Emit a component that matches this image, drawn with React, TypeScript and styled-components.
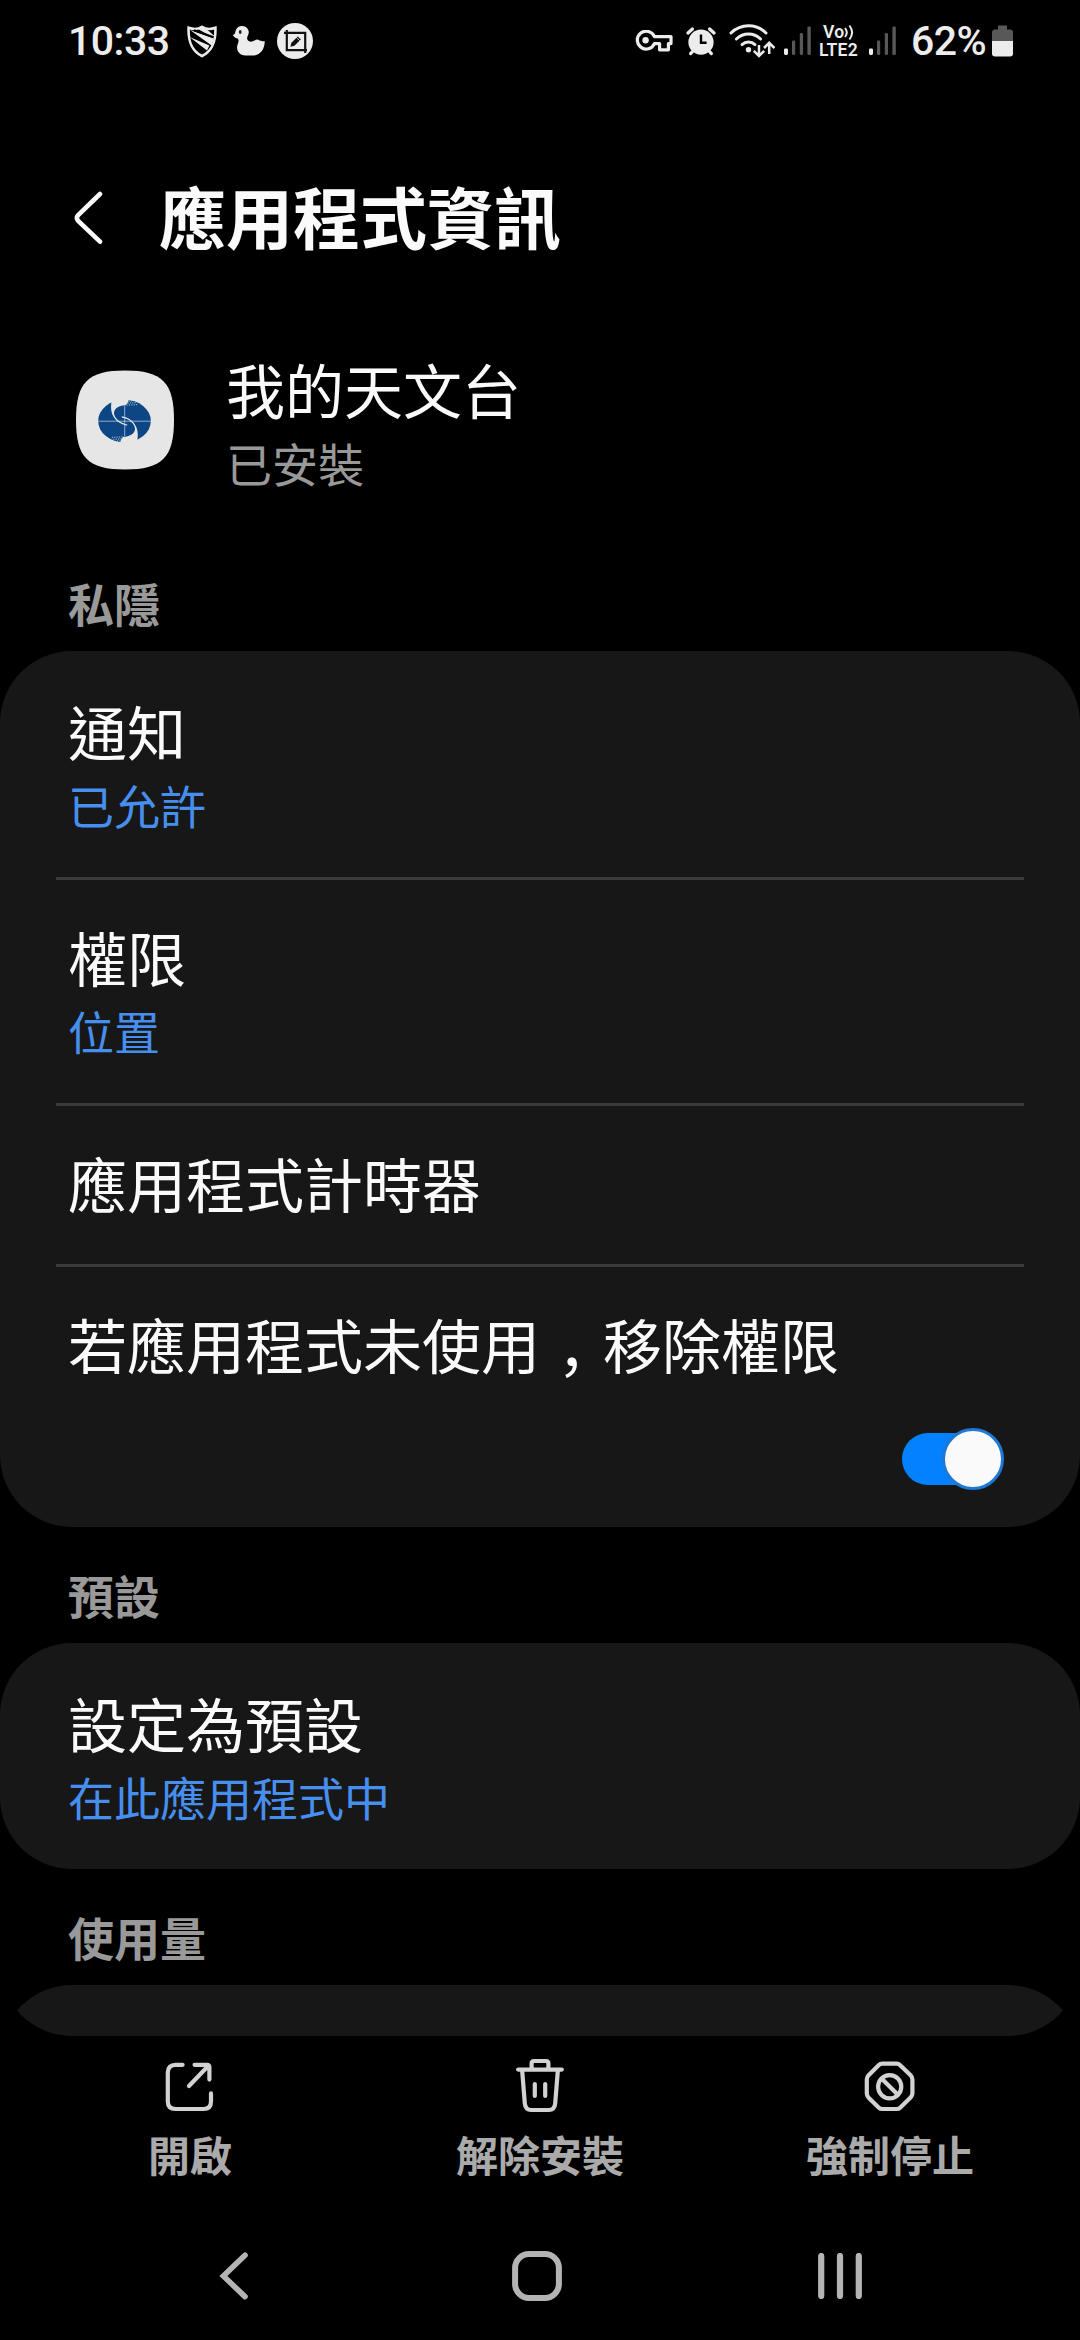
import React, { useState } from 'react';
import styled, { createGlobalStyle } from 'styled-components';

const CJK = `"Noto Sans CJK TC", "Noto Sans CJK JP", sans-serif`;
const LATIN = `Roboto, "Noto Sans", sans-serif`;

const GlobalStyle = createGlobalStyle`
  *, *::before, *::after { box-sizing: border-box; }
  html, body { margin: 0; padding: 0; background: #000; }
  button { border: 0; padding: 0; background: none; font: inherit; color: inherit; }
  svg { display: block; flex: none; }
`;

const Screen = styled.div`
  display: flex;
  flex-direction: column;
  width: 1080px;
  height: 2340px;
  overflow: hidden;
  background: #000;
  color: #fafafa;
  font-family: ${CJK};

  > * { flex-shrink: 0; }
`;

/* Status bar */
const StatusBar = styled.header`
  display: flex;
  justify-content: space-between;
  align-items: center;
  height: 82px;
  padding: 0 67px 0 68px;
  color: #ececec;
  font-family: ${LATIN};
`;

const StatusGroup = styled.div`
  display: flex;
  align-items: center;
`;

const Clock = styled.span`
  width: 116px;
  font-size: 41px;
  line-height: 48px;
  font-weight: 500;
  letter-spacing: -0.5px;
  white-space: nowrap;
`;

const StatusIcon = styled.span<{ $gap?: number }>`
  display: flex;
  margin-left: ${({ $gap = 0 }) => $gap}px;
`;

const VoLte = styled.span`
  display: flex;
  flex-direction: column;
  width: 41px;
  margin-left: 8px;
  font-weight: 600;
  font-size: 17.5px;
  line-height: 18px;
  letter-spacing: 0.2px;
  white-space: nowrap;
`;

const VoLine = styled.span`
  display: flex;
  align-items: center;
  padding-left: 4px;
  height: 17px;
`;

const Percent = styled.span`
  width: 78px;
  margin-left: 15px;
  font-size: 41px;
  line-height: 48px;
  font-weight: 500;
  letter-spacing: -0.6px;
  white-space: nowrap;
`;

/* Page header */
const TitleBar = styled.div`
  display: flex;
  align-items: center;
  height: 240px;
  padding: 32px 0 0 74px;
`;

const Title = styled.h1`
  margin: 0 0 7px 55px;
  font-size: 67px;
  line-height: 96px;
  font-weight: 700;
`;

const Scroll = styled.main`
  height: 1714px;
  border-radius: 0 0 72px 72px;
  overflow: hidden;
`;

const AppHeader = styled.div`
  display: flex;
  align-items: flex-start;
  height: 213px;
  padding: 0 0 0 76px;
`;

const AppIcon = styled.span`
  display: flex;
  padding-top: 48px;
`;

const AppText = styled.div`
  display: flex;
  flex-direction: column;
  margin: 27px 0 0 52px;
`;

/* Sections */
const SectionLabel = styled.h2`
  margin: 0;
  height: 116px;
  padding: 33px 0 0 68px;
  font-size: 46px;
  line-height: 68px;
  font-weight: 700;
  color: #999;
`;

const Card = styled.section`
  border-radius: 72px;
  background: #171717;
`;

const Row = styled.div<{ $height: number }>`
  display: flex;
  flex-direction: column;
  height: ${({ $height }) => $height}px;
  padding: 40px 68px 0;
  background: linear-gradient(#3a3a3a, #3a3a3a) 56px 0 / 968px 3px no-repeat;

  &:first-child { background: none; }
`;

const RowTitle = styled.span`
  height: 80px;
  font-size: 59px;
  line-height: 80px;
  white-space: nowrap;
`;

const RowValue = styled.span<{ $muted?: boolean }>`
  font-size: 46px;
  line-height: 66px;
  white-space: nowrap;
  color: ${({ $muted }) => ($muted ? '#999' : '#478fee')};
`;

/* The full-width comma sits on the baseline instead of mid-height. */
const Comma = styled.span`
  display: inline-block;
  width: 63px;
  text-align: center;
  line-height: 0;
  vertical-align: -20px;
`;

const Switch = styled.button<{ $on: boolean }>`
  display: flex;
  align-items: center;
  justify-content: ${({ $on }) => ($on ? 'flex-end' : 'flex-start')};
  align-self: flex-end;
  width: 99px;
  height: 52px;
  margin: 49px 11px 0 0;
  border-radius: 26px;
  background: ${({ $on }) => ($on ? '#0381fe' : '#5a5a5a')};
`;

const Thumb = styled.span`
  flex: none;
  width: 62px;
  height: 62px;
  margin-right: -3px;
  border: 3px solid #1d78d6;
  border-radius: 50%;
  background: #fafafa;
`;

/* Bottom bars */
const ActionBar = styled.nav`
  display: grid;
  grid-template-columns: repeat(3, 350px);
  justify-content: center;
  height: 174px;
  padding-top: 20px;
`;

const Action = styled.button`
  display: flex;
  flex-direction: column;
  align-items: center;
  color: #aaa;
  font-family: ${CJK};
  font-size: 42px;
  line-height: 60px;
  font-weight: 700;

  svg { margin-bottom: 8px; }
`;

const NavBar = styled.nav`
  display: grid;
  grid-template-columns: repeat(3, 303px);
  justify-content: center;
  align-items: center;
  justify-items: center;
  height: 130px;
  padding: 2px 6px 0 0;
`;

const ShieldIcon = () => (
  <svg width="30" height="33" viewBox="0 0 30 33">
    <path d="M15 1.8 C11.5 4.2 6 4.4 1.6 2.8 C1.2 14 3 25 15 31 C27 25 28.8 14 28.4 2.8 C24 4.4 18.5 4.2 15 1.8Z" fill="none" stroke="#ececec" strokeWidth="2.6" />
    <path d="M10 3.4 L15 2 L20 4.4 L28 11.4 L27 13 Z" fill="#ececec" />
    <path d="M3 5 L27 13.4 L24.6 20.4 Z" fill="#ececec" />
    <path d="M2.6 12 L22.4 20.6 L20 25.4 Z" fill="#ececec" />
    <path d="M7 5.2 L26.6 12.2" stroke="#000" strokeWidth="2" />
  </svg>
);

const DuckIcon = () => (
  <svg width="34" height="32" viewBox="0 0 34 32">
    <path d="M0.6 10 C3 9.8 3.2 7.6 3.6 5.8 C4.6 2.2 7.4 0.8 10.2 1 C14.4 1.2 17 4.2 16.8 7.6 C16.6 10.4 14.4 12 15.4 14.6 C16.4 17 19.6 17.4 22.6 15.6 C24 14.8 25 14.2 26.2 14.8 C28.4 16 30.8 16.6 32.8 16.2 C32.6 24.6 28.2 30.2 20.4 30.6 L13.4 30.6 C6.4 30 3.8 24.4 5.6 19.4 C6.4 17 7.2 15.4 5.8 13.4 C4 13.4 1.8 12 0.6 10Z" fill="#ececec" />
    <ellipse cx="8.2" cy="7" rx="1.4" ry="2" fill="#222" />
  </svg>
);

const CaptureIcon = () => (
  <svg width="36" height="36" viewBox="0 0 36 36">
    <circle cx="18" cy="18" r="18" fill="#ececec" />
    <g fill="none" stroke="#111" strokeWidth="2.2">
      <path d="M7 9.8 H28.2 V30" />
      <path d="M9.8 7 V27.2 H30" />
    </g>
    <path d="M13.4 23.8 L14.4 19.8 L20.8 13.4 L23.8 16.4 L17.4 22.8Z" fill="#111" />
    <path d="M19.4 14.4 L22.8 17.8" stroke="#ececec" strokeWidth="0.8" />
  </svg>
);

const KeyIcon = () => (
  <svg width="38" height="22" viewBox="0 0 38 22">
    <path d="M19.4 6.6 H36 V13.6 H33.4 V19.8 H24.6 V13.6 H19.4 A8.9 8.9 0 1 1 19.4 6.6Z" fill="none" stroke="#ececec" strokeWidth="3.2" strokeLinejoin="round" />
    <circle cx="10.6" cy="10.2" r="3.2" fill="#ececec" />
  </svg>
);

const AlarmIcon = () => (
  <svg width="30" height="29" viewBox="0 0 30 29">
    <g stroke="#ececec" strokeWidth="3.2" strokeLinecap="round" fill="none">
      <path d="M2 6 L6.4 2" />
      <path d="M28 6 L23.6 2" />
      <path d="M4.6 26.6 L7 24" />
      <path d="M25.4 26.6 L23 24" />
    </g>
    <circle cx="15" cy="15.2" r="12.6" fill="#ececec" />
    <path d="M15 7.6 V15.8 H20.6" fill="none" stroke="#000" strokeWidth="2.4" />
  </svg>
);

const WifiIcon = () => (
  <svg width="46" height="34" viewBox="0 0 46 34">
    <g fill="none" stroke="#ececec" strokeWidth="3" strokeLinecap="round">
      <path d="M2 9 C12 -0.6 27 -0.6 37 9" />
      <path d="M7.4 15 C14.4 8.4 24.6 8.4 31.6 15" />
      <path d="M13 20.6 C16.8 17.2 22.2 17.2 26 20.6" />
    </g>
    <circle cx="19.5" cy="25.8" r="2.7" fill="#ececec" />
    <g fill="none" stroke="#ececec" strokeWidth="2.5">
      <path d="M30 21 V31.4 M24.8 26.8 L30 32 L35.2 26.8" />
      <path d="M40.2 30 V19.4 M35 24 L40.2 18.8 L45.4 24" />
    </g>
  </svg>
);

const SignalIcon = () => (
  <svg width="27" height="30" viewBox="0 0 27 30">
    <rect x="0" y="22.4" width="4" height="6.6" rx="1.4" fill="#ececec" />
    <rect x="8" y="14.6" width="3.2" height="14.4" rx="1.2" fill="#585858" />
    <rect x="15.8" y="7" width="3.2" height="22" rx="1.2" fill="#585858" />
    <rect x="23.4" y="0.6" width="3.4" height="28.4" rx="1.2" fill="#585858" />
  </svg>
);

const WavesIcon = () => (
  <svg width="12" height="17" viewBox="0 0 12 17">
    <path d="M1 4 Q4.6 8.5 1 13 M5.4 1.5 Q10.8 8.5 5.4 15.5" fill="none" stroke="#ececec" strokeWidth="2" />
  </svg>
);

const BatteryIcon = () => (
  <svg width="21" height="32" viewBox="0 0 21 32">
    <path d="M6 0.6 H15 V4.4 H18 Q21 4.4 21 7.4 V16 H0 V7.4 Q0 4.4 3 4.4 H6Z" fill="#585858" />
    <path d="M0 16 H21 V28.4 Q21 31.4 18 31.4 H3 Q0 31.4 0 28.4Z" fill="#ececec" />
  </svg>
);

const BackIcon = () => (
  <svg width="30" height="54" viewBox="0 0 30 54">
    <path d="M26 3 L4.2 24 Q1.6 27 4.2 30 L26 50.6" fill="none" stroke="#fafafa" strokeWidth="4.6" strokeLinecap="round" />
  </svg>
);

const ObservatoryIcon = () => (
  <svg width="98" height="100" viewBox="0 0 99 100">
    <path d="M49.5 0 C87 0 99 12 99 50 C99 88 87 100 49.5 100 C12 100 0 88 0 50 C0 12 12 0 49.5 0Z" fill="#e6e6e6" />
    <g transform="translate(22 29.5)">
      <ellipse cx="27" cy="21.5" rx="26.6" ry="21.5" fill="#0c4684" />
      {[0, 180].map((turn) => (
        <g key={turn} transform={`rotate(${turn} 27 21.5)`}>
          <path d="M14.6 -1 C12 8 12.6 22.4 29.6 26.2 L29.8 25 C22.6 23.8 16 18.4 16.4 13 C17 8.4 22 5.8 28 5.6 C30 4 31 2 31.4 -1Z" fill="#e6e6e6" />
          <path d="M29 5.4 L40 5 M30 3.4 L39 3 M31 1.4 L36 1.2" stroke="#e6e6e6" strokeWidth="0.8" strokeDasharray="1.2 1.2" />
        </g>
      ))}
      <path d="M0 21.7 H54 M27.2 6.4 V37" stroke="#cfdae6" strokeWidth="0.7" />
    </g>
  </svg>
);

const OpenIcon = () => (
  <svg width="58" height="60" viewBox="0 0 58 60" fill="none" stroke="#d2d2d2" strokeWidth="4.2" strokeLinecap="round" strokeLinejoin="round">
    <path d="M21.6 8.8 H14.6 Q6.8 8.8 6.8 16.6 V45.2 Q6.8 53 14.6 53 H42.6 Q50 53 50 45.2 V37.4" />
    <path d="M33.6 8.8 H46 Q48.4 8.8 48.4 11.2 V23.6 M47.4 9.8 L28 30" />
  </svg>
);

const TrashIcon = () => (
  <svg width="56" height="60" viewBox="0 0 56 60" fill="none" stroke="#d2d2d2" strokeWidth="4.2" strokeLinecap="round" strokeLinejoin="round">
    <path d="M6.2 13.6 H49.8" />
    <path d="M19.6 13 V7.4 Q19.6 5 22 5 H34 Q36.4 5 36.4 7.4 V13" />
    <path d="M10.2 15 L12.8 47.4 Q13.4 54 19.2 54 H36.8 Q42.6 54 43.2 47.4 L45.8 15" />
    <path d="M22.8 28 V40 M33.2 28 V40" />
  </svg>
);

const StopIcon = () => (
  <svg width="56" height="60" viewBox="0 0 56 60" fill="none" stroke="#d2d2d2" strokeWidth="4.2" strokeLinecap="round" strokeLinejoin="round">
    <path d="M20.4 7.6 H34.6 Q36.6 7.6 38.2 9.2 L48.6 19.2 Q50.4 21 50.4 23.2 V37.6 Q50.4 39.6 48.8 41.2 L38.4 51.4 Q36.8 53 34.6 53 H20.4 Q18.2 53 16.6 51.4 L6.4 41.4 Q4.8 39.8 4.8 37.6 V23.2 Q4.8 21 6.4 19.4 L16.6 9.2 Q18.2 7.6 20.4 7.6Z" />
    <circle cx="27.7" cy="30.7" r="11.6" />
    <path d="M19.8 22.8 L35.6 38.6" />
  </svg>
);

const NavBackIcon = () => (
  <svg width="30" height="48" viewBox="0 0 30 48">
    <path d="M26 3.2 L4.4 24 L26 44.6" fill="none" stroke="#b4b4b4" strokeWidth="5.6" strokeLinecap="round" />
  </svg>
);

const NavHomeIcon = () => (
  <svg width="50" height="50" viewBox="0 0 50 50">
    <rect x="3.1" y="3.1" width="43.8" height="43.8" rx="14" fill="none" stroke="#b4b4b4" strokeWidth="6" />
  </svg>
);

const NavRecentsIcon = () => (
  <svg width="44" height="46" viewBox="0 0 44 46">
    <path d="M3.2 3 V43 M22 3 V43 M40.8 3 V43" fill="none" stroke="#b4b4b4" strokeWidth="6.2" strokeLinecap="round" />
  </svg>
);

export default function App() {
  const [removeUnused, setRemoveUnused] = useState(true);

  return (
    <>
      <GlobalStyle />
      <Screen lang="zh-Hant">
        <StatusBar>
          <StatusGroup>
            <Clock>10:33</Clock>
            <StatusIcon $gap={3}><ShieldIcon /></StatusIcon>
            <StatusIcon $gap={15}><DuckIcon /></StatusIcon>
            <StatusIcon $gap={11}><CaptureIcon /></StatusIcon>
          </StatusGroup>
          <StatusGroup>
            <StatusIcon><KeyIcon /></StatusIcon>
            <StatusIcon $gap={13}><AlarmIcon /></StatusIcon>
            <StatusIcon $gap={13}><WifiIcon /></StatusIcon>
            <StatusIcon $gap={9}><SignalIcon /></StatusIcon>
            <VoLte>
              <VoLine>Vo<WavesIcon /></VoLine>
              <span>LTE2</span>
            </VoLte>
            <StatusIcon $gap={9}><SignalIcon /></StatusIcon>
            <Percent>62%</Percent>
            <StatusIcon $gap={3}><BatteryIcon /></StatusIcon>
          </StatusGroup>
        </StatusBar>

        <TitleBar>
          <BackIcon />
          <Title>應用程式資訊</Title>
        </TitleBar>

        <Scroll>
          <AppHeader>
            <AppIcon><ObservatoryIcon /></AppIcon>
            <AppText>
              <RowTitle>我的天文台</RowTitle>
              <RowValue $muted>已安裝</RowValue>
            </AppText>
          </AppHeader>

          <SectionLabel>私隱</SectionLabel>
          <Card>
            <Row $height={226}>
              <RowTitle>通知</RowTitle>
              <RowValue>已允許</RowValue>
            </Row>
            <Row $height={226}>
              <RowTitle>權限</RowTitle>
              <RowValue>位置</RowValue>
            </Row>
            <Row $height={161}>
              <RowTitle>應用程式計時器</RowTitle>
            </Row>
            <Row $height={263}>
              <RowTitle>若應用程式未使用<Comma>，</Comma>移除權限</RowTitle>
              <Switch $on={removeUnused} onClick={() => setRemoveUnused(!removeUnused)}>
                <Thumb />
              </Switch>
            </Row>
          </Card>

          <SectionLabel>預設</SectionLabel>
          <Card>
            <Row $height={226}>
              <RowTitle>設定為預設</RowTitle>
              <RowValue>在此應用程式中</RowValue>
            </Row>
          </Card>

          <SectionLabel>使用量</SectionLabel>
          <Card>
            <Row $height={226} />
          </Card>
        </Scroll>

        <ActionBar>
          <Action><OpenIcon />開啟</Action>
          <Action><TrashIcon />解除安裝</Action>
          <Action><StopIcon />強制停止</Action>
        </ActionBar>

        <NavBar>
          <NavBackIcon />
          <NavHomeIcon />
          <NavRecentsIcon />
        </NavBar>
      </Screen>
    </>
  );
}
